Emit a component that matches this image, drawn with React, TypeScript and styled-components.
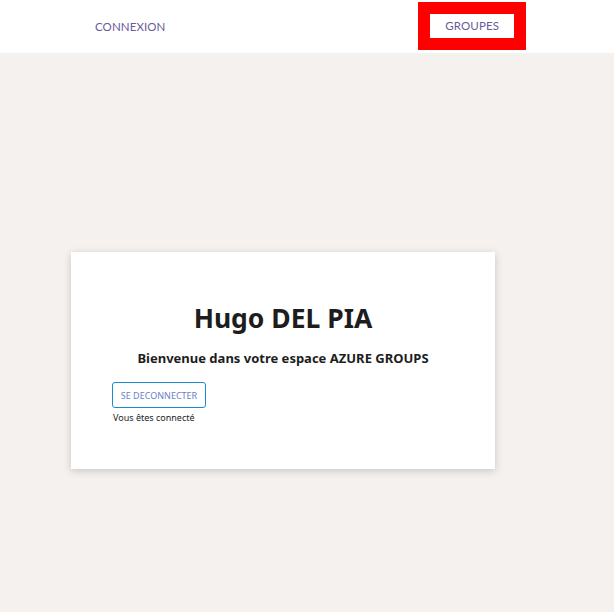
import styled, { createGlobalStyle } from "styled-components";

const GlobalStyle = createGlobalStyle`
	html, body {
		margin: 0;
		padding: 0;
		background: #f4f1ee;
	}
	body {
		font-family: "Noto Sans", "Open Sans", sans-serif;
		color: #1d1d1d;
	}
`;

const Page = styled.div`
	min-height: 612px;
	background: #f4f1ee;
`;

const Header = styled.header`
	height: 53px;
	background: #ffffff;
	display: flex;
	align-items: center;
	padding: 0 88px 1px 95px;
	box-sizing: border-box;
`;

const NavLink = styled.a<{ $active?: boolean }>`
	font-family: "Lato", "Noto Sans", sans-serif;
	font-size: 11.5px;
	font-weight: 400;
	letter-spacing: 0.1px;
	color: #6a5a9a;
	text-decoration: none;
	text-transform: uppercase;
	${(p) =>
		p.$active &&
		`
		margin-left: auto;
		border: 12px solid #ff0000;
		padding: 5px 15px;
		line-height: 14px;
	`}
`;

const Main = styled.main`
	padding: 199px 0 0 71px;
`;

const Card = styled.section`
	width: 424px;
	height: 217px;
	box-sizing: border-box;
	background: #ffffff;
	box-shadow: 0 2px 8px rgba(0, 0, 0, 0.18);
	padding: 49px 41px 0;
`;

const Title = styled.h1`
	margin: 0;
	text-align: center;
	font-size: 26.5px;
	font-weight: 700;
	line-height: 35px;
`;

const Subtitle = styled.h2`
	margin: 13px 0 0;
	text-align: center;
	font-size: 13px;
	font-weight: 700;
	line-height: 18px;
`;

const LogoutButton = styled.button`
	margin-top: 15px;
	display: block;
	height: 26px;
	width: 94px;
	padding: 0;
	background: #ffffff;
	border: 1px solid #1a8bd0;
	border-radius: 3px;
	font-family: "Noto Sans", sans-serif;
	font-size: 9px;
	color: #6c7fc6;
	text-transform: uppercase;
`;

const Status = styled.p`
	margin: 4px 0 0 1px;
	font-size: 9px;
	line-height: 12px;
`;

export default function App() {
	return (
		<Page>
			<GlobalStyle />
			<Header>
				<NavLink href="#">Connexion</NavLink>
				<NavLink href="#" $active>
					Groupes
				</NavLink>
			</Header>
			<Main>
				<Card>
					<Title>Hugo DEL PIA</Title>
					<Subtitle>Bienvenue dans votre espace AZURE GROUPS</Subtitle>
					<LogoutButton>Se deconnecter</LogoutButton>
					<Status>Vous êtes connecté</Status>
				</Card>
			</Main>
		</Page>
	);
}
